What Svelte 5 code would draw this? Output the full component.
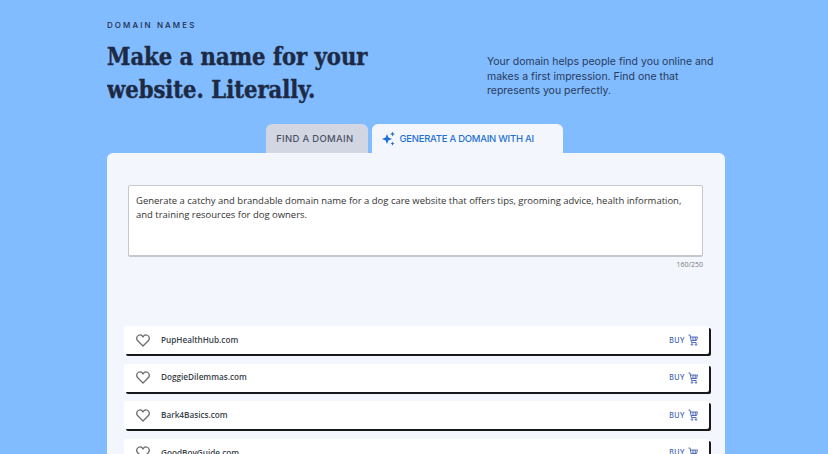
<script>
  const names = ['PupHealthHub.com', 'DoggieDilemmas.com', 'Bark4Basics.com', 'GoodBoyGuide.com'];
  const prompt = 'Generate a catchy and brandable domain name for a dog care website that offers tips, grooming advice, health information, and training resources for dog owners.';
</script>

<div class="page">
  <header class="hero">
    <div class="intro">
      <p class="eyebrow">DOMAIN NAMES</p>
      <h1>Make a name for your website. Literally.</h1>
    </div>
    <p class="lead">Your domain helps people find you online and makes a first impression. Find one that represents you perfectly.</p>
  </header>

  <div class="tabs">
    <div class="tab">FIND A DOMAIN</div>
    <div class="tab active">
      <svg width="15" height="15" viewBox="0 0 15 15" fill="#1f6fd6">
        <path d="M6 3 L7.4 6.6 L11 8 L7.4 9.4 L6 13 L4.6 9.4 L1 8 L4.6 6.6 Z" />
        <path d="M11.5 0.5 L12.2 2.3 L14 3 L12.2 3.7 L11.5 5.5 L10.8 3.7 L9 3 L10.8 2.3 Z" />
        <path d="M11.5 10.5 L12.1 12 L13.6 12.6 L12.1 13.2 L11.5 14.7 L10.9 13.2 L9.4 12.6 L10.9 12 Z" />
      </svg>
      GENERATE A DOMAIN WITH AI
    </div>
  </div>

  <section class="card">
    <div class="prompt">
      <div class="input">{prompt}</div>
      <div class="count">160/250</div>
    </div>
    <ul class="results">
      {#each names as name}
        <li class="row">
          <svg class="heart" width="14" height="13" viewBox="0 0 24 22" fill="none" stroke="#6b6b6b" stroke-width="2.2" stroke-linejoin="round">
            <path d="M12 20.5 L3 11.5 C0 8.5 1 3.5 4.5 2 C7.5 0.8 10.5 2 12 5 C13.5 2 16.5 0.8 19.5 2 C23 3.5 24 8.5 21 11.5 Z" />
          </svg>
          <span class="name">{name}</span>
          <span class="buy">BUY</span>
          <svg class="cart" width="10" height="12" viewBox="0 0 20 24" fill="none" stroke="#3f5fb0" stroke-width="1.8">
            <path d="M1 2 H4 L7 17 H17" />
            <path d="M5 6 H19 L17 13 H6.5" />
            <path d="M10 6 V13 M14.5 6 V13" />
            <circle cx="8" cy="21" r="1.6" />
            <circle cx="16" cy="21" r="1.6" />
          </svg>
        </li>
      {/each}
    </ul>
  </section>
</div>

<style>
  :global(body) {
    margin: 0;
    background: #80bcff;
  }
  .page {
    width: 618px;
    height: 454px;
    margin-left: 107px;
    overflow: hidden;
  }
  .hero {
    display: flex;
    justify-content: space-between;
    height: 124px;
  }
  .intro {
    width: 300px;
  }
  .eyebrow {
    margin: 20px 0 0;
    font: 500 8px/10px Inter, sans-serif;
    letter-spacing: 2.1px;
    color: #1f2b48;
  }
  h1 {
    margin: 11px 0 0;
    font-family: "DejaVu Serif Condensed", "DejaVu Serif", serif;
    font-stretch: condensed;
    font-weight: 700;
    font-size: 23.5px;
    line-height: 33px;
    color: #1e2a44;
    -webkit-text-stroke: 0.4px #1e2a44;
  }
  .lead {
    width: 238px;
    margin: 55px 0 0;
    font: 400 10.5px/14.6px Inter, sans-serif;
    color: #2a3a5c;
  }
  .tabs {
    display: flex;
    justify-content: center;
    gap: 4px;
    height: 29px;
    padding-right: 3px;
  }
  .tab {
    display: flex;
    align-items: center;
    gap: 3px;
    padding: 0 15px 0 10px;
    border-radius: 6px 6px 0 0;
    background: #d2d6e3;
    font: 500 9.5px/1 Inter, sans-serif;
    letter-spacing: 0.3px;
    color: #4a5266;
  }
  .tab.active {
    background: #f3f7fd;
    color: #1f6fd6;
    padding: 0 29px 0 9px;
    letter-spacing: -0.25px;
  }
  .card {
    height: 301px;
    box-sizing: border-box;
    background: #f3f7fd;
    border-radius: 6px 6px 0 0;
    padding: 32px 16px 0 17px;
  }
  .prompt {
    margin: 0 6px 0 4px;
  }
  .input {
    box-sizing: border-box;
    height: 72px;
    padding: 8px 7px;
    background: #fff;
    border: 1px solid #c4c7cc;
    border-bottom-width: 2px;
    border-radius: 2px;
    font: 400 9.48px/14px "Open Sans", sans-serif;
    color: #333;
  }
  .count {
    margin-top: 3px;
    text-align: right;
    font: 400 7px/10px "Open Sans", sans-serif;
    color: #777;
  }
  .results {
    list-style: none;
    margin: 0;
    padding: 56px 0 0;
    display: flex;
    flex-direction: column;
    gap: 9.6px;
  }
  .row {
    display: flex;
    align-items: center;
    height: 28px;
    padding: 0 11px 0 12px;
    background: #fff;
    border-radius: 2px;
    box-shadow: 2px 2px 0 #16181c;
  }
  .heart {
    margin-right: 11px;
  }
  .name {
    flex: 1;
    font: 600 8.2px/1 "Open Sans", sans-serif;
    color: #3a3f4a;
  }
  .buy {
    margin-right: 3px;
    font: 500 7px/1 Inter, sans-serif;
    letter-spacing: 0.4px;
    color: #3f5fb0;
  }
</style>
